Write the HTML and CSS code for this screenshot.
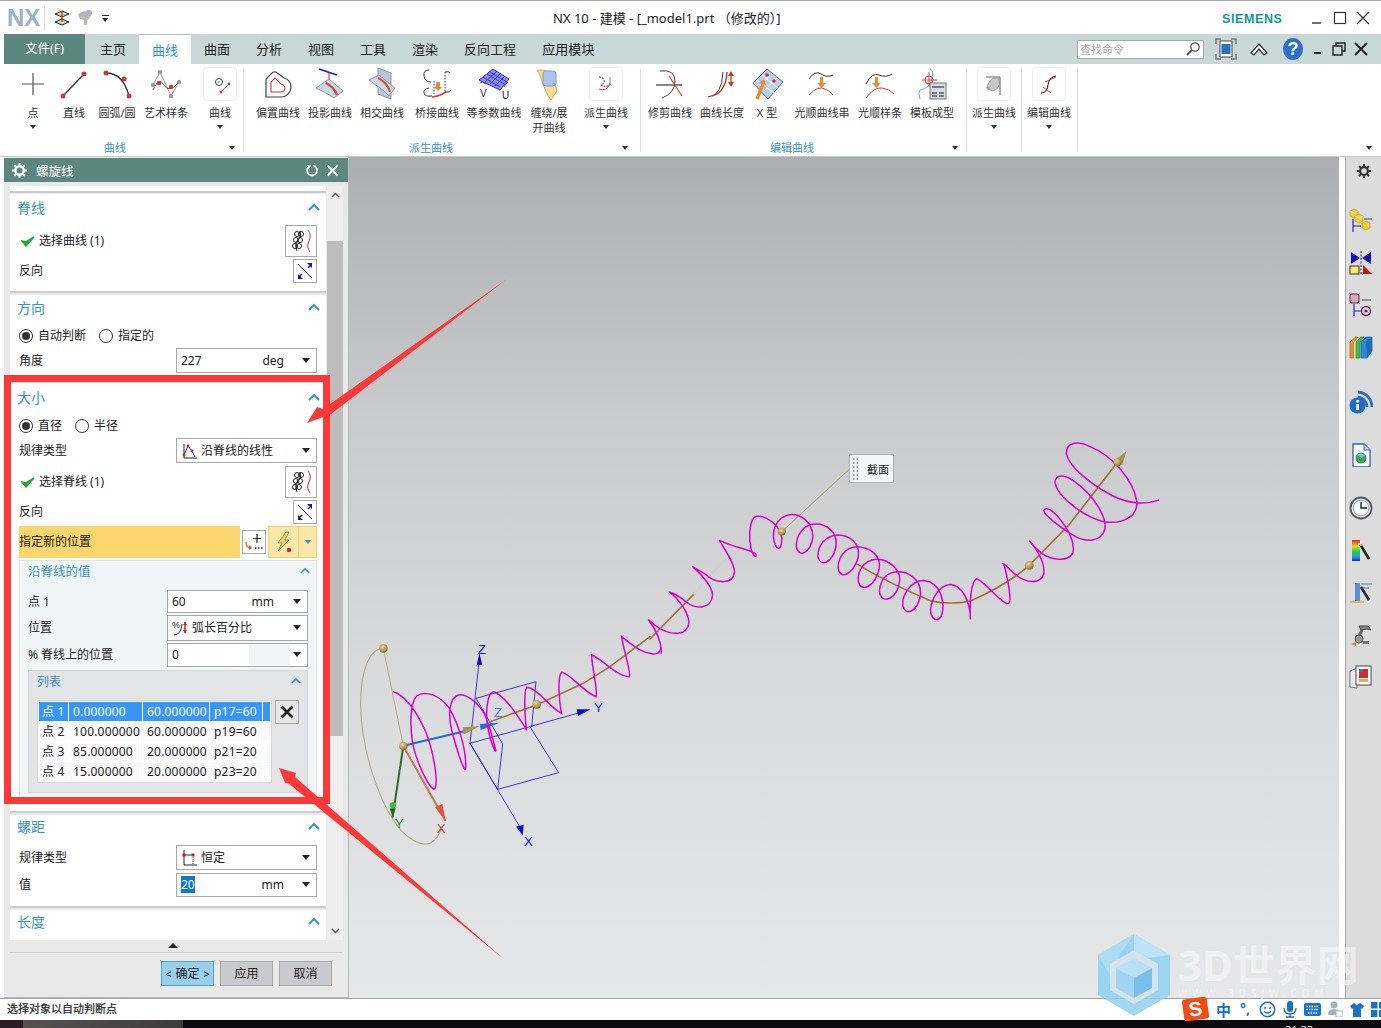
FILE: index.html
```html
<!DOCTYPE html>
<html lang="zh">
<head>
<meta charset="utf-8">
<title>NX 10 - 建模</title>
<link rel="stylesheet" href="styles.css">
</head>
<body>
<div class="app">
  <header class="titlebar">
    <div class="nx">NX</div>
    <div class="qa">
      <svg width="18" height="18" viewBox="0 0 18 18"><path d="M2 5l7-3 7 3-7 3z" fill="#bfe3c0" stroke="#222"/><path d="M2 13l7-3 7 3-7 3z" fill="#bfe3c0" stroke="#222"/><path d="M9 3v10" stroke="#d23a12" stroke-width="1.5"/></svg>
      <svg width="18" height="18" viewBox="0 0 18 18"><path d="M2 6c2-4 11-5 14-2l-3 6-2 1v5H8v-5L4 10z" fill="#b9b9b4"/><circle cx="13" cy="4" r="3" fill="#aab0cc"/></svg>
      <span class="qa-more"></span>
    </div>
    <div class="wintitle">NX 10 - 建模 - [_model1.prt （修改的）]</div>
    <div class="siemens">SIEMENS</div>
    <div class="winbtns">
      <svg width="14" height="14" viewBox="0 0 14 14"><path d="M2 12h9" stroke="#333" stroke-width="1.4"/></svg>
      <svg width="14" height="14" viewBox="0 0 14 14"><rect x="1.5" y="1.5" width="11" height="11" fill="none" stroke="#333" stroke-width="1.2"/></svg>
      <svg width="14" height="14" viewBox="0 0 14 14"><path d="M1 1l12 12M13 1L1 13" stroke="#333" stroke-width="1.3"/></svg>
    </div>
  </header>

  <nav class="tabbar">
    <div class="filetab">文件(F)</div>
    <div class="tab">主页</div>
    <div class="tab active">曲线</div>
    <div class="tab">曲面</div>
    <div class="tab">分析</div>
    <div class="tab">视图</div>
    <div class="tab">工具</div>
    <div class="tab">渲染</div>
    <div class="tab">反向工程</div>
    <div class="tab">应用模块</div>
    <div class="tabtools">
      <div class="search"><span>查找命令</span>
        <svg width="16" height="16" viewBox="0 0 16 16"><circle cx="10" cy="6" r="4.2" fill="#fff" stroke="#555" stroke-width="1.3"/><path d="M7 9l-5 5" stroke="#555" stroke-width="2"/></svg>
      </div>
      <svg class="t-full" width="24" height="24" viewBox="0 0 24 24"><path d="M2 7V2h5M17 2h5v5M22 17v5h-5M7 22H2v-5" fill="none" stroke="#777" stroke-width="1.5"/><rect x="6" y="4" width="12" height="16" fill="#fff" stroke="#444"/><rect x="7.5" y="7" width="9" height="10" fill="#2a70c8"/></svg>
      <svg class="t-up" width="20" height="16" viewBox="0 0 20 16"><path d="M2 12l8-9 8 9-3 2-5-6-5 6z" fill="#fff" stroke="#333" stroke-width="1.2"/></svg>
      <div class="help">?</div>
      <svg class="t-min" width="12" height="12" viewBox="0 0 12 12"><path d="M2 10h7" stroke="#222" stroke-width="2"/></svg>
      <svg class="t-res" width="14" height="14" viewBox="0 0 14 14"><path d="M4 4V1h9v8h-3M1 4h9v9H1z" fill="none" stroke="#222" stroke-width="1.4"/></svg>
      <svg class="t-x" width="14" height="14" viewBox="0 0 14 14"><path d="M1 1l12 12M13 1L1 13" stroke="#222" stroke-width="2"/></svg>
    </div>
  </nav>

  <section class="ribbon">
    <div class="group g1">
      <div class="items">
        <div class="ri w38"><svg class="ic" viewBox="0 0 32 32"><path d="M16 5v22M5 16h22" stroke="#555" stroke-width="1.2"/></svg><span class="rl">点</span><i class="car"></i></div>
        <div class="ri w44"><svg class="ic" viewBox="0 0 32 32"><path d="M5 28L26 6" stroke="#333" stroke-width="1.3"/><circle cx="5" cy="28" r="2.5" fill="#cc3b32"/><circle cx="26" cy="6" r="2.5" fill="#cc3b32"/></svg><span class="rl">直线</span></div>
        <div class="ri w42"><svg class="ic" viewBox="0 0 32 32"><path d="M5 5Q22 5 28 28" fill="none" stroke="#333" stroke-width="1.3"/><circle cx="5" cy="5" r="2.5" fill="#cc3b32"/><circle cx="23" cy="11" r="2.5" fill="#cc3b32"/><circle cx="28" cy="28" r="2.5" fill="#cc3b32"/></svg><span class="rl">圆弧/圆</span></div>
        <div class="ri w54 ml1"><svg class="ic" viewBox="0 0 32 32"><path d="M3 17L10 4 21 28 29 14" fill="none" stroke="#aaa" stroke-width="1.2"/><path d="M3 22Q9 8 14 17T29 14" fill="none" stroke="#555"/><circle cx="3" cy="17" r="2.2" fill="#999"/><circle cx="10" cy="4" r="2.2" fill="#999"/><circle cx="21" cy="28" r="2.2" fill="#999"/><circle cx="29" cy="14" r="2.2" fill="#999"/><circle cx="9" cy="15" r="2.3" fill="#cc3b32"/><circle cx="21" cy="19" r="2.3" fill="#cc3b32"/></svg><span class="rl">艺术样条</span></div>
        <div class="ri w40 ml7"><svg class="ic boxed" viewBox="0 0 32 32"><circle cx="15" cy="14" r="3.5" fill="none" stroke="#333"/><circle cx="15" cy="14" r=".8" fill="#333"/><path d="M17 24l8-8" stroke="#888"/><circle cx="17" cy="24" r="1.4" fill="#cc3b32"/><circle cx="25" cy="16" r="1.4" fill="#cc3b32"/></svg><span class="rl">曲线</span><i class="car"></i></div>
      </div>
      <div class="glabel">曲线<i class="gcar"></i></div>
    </div>
    <div class="group g2">
      <div class="items">
        <div class="ri w52"><svg class="ic" viewBox="0 0 32 32"><path d="M4 29V11l7-7h3l8 6a9 9 0 0 1 7 9 10 10 0 0 1-10 10z" fill="#fff" stroke="#444" stroke-width="1.2"/><path d="M9 24V14l4-4 6 6a5 5 0 0 1 4 4 4 4 0 0 1-4 4z" fill="none" stroke="#cc3b32" stroke-width="1.1"/></svg><span class="rl">偏置曲线</span></div>
        <div class="ri w52"><svg class="ic" viewBox="0 0 32 32"><path d="M5 1l18 6" stroke="#1c1ce0" stroke-width="1.6"/><path d="M15 5v11" stroke="#c23" /><path d="M13 13h4l-2 4z" fill="#c23"/><path d="M2 20l13-9 14 12-9 7C14 26 8 23 2 20z" fill="#c9d7ea" stroke="#8b97ab"/><path d="M12 15q8 4 11 12" fill="none" stroke="#d6482e" stroke-width="2.4"/></svg><span class="rl">投影曲线</span></div>
        <div class="ri w52"><svg class="ic" viewBox="0 0 32 32"><path d="M12 0l13 5v26l-13-5z" fill="#bcc6da" stroke="#8a95ad"/><path d="M3 12L13 7l16 13-6 8C17 21 9 17 3 12z" fill="#ccd9ec" stroke="#8a95ad"/><path d="M12 10q9 4 12 14" fill="none" stroke="#d6552e" stroke-width="2.2"/></svg><span class="rl">相交曲线</span></div>
        <div class="ri w56 ml1"><svg class="ic" viewBox="0 0 32 32"><path d="M8 2Q2 2 3 8t7 6M8 20q-6 1-5 5t8 3" fill="none" stroke="#333"/><path d="M13 13v13M24 4v20" stroke="#2b2bb0" stroke-dasharray="1.5 1.5"/><path d="M24 4q4-1 5 1M24 24q4 1 6-2" fill="none" stroke="#333"/><path d="M11 29q8-1 14-5" fill="none" stroke="#dd3b32" stroke-width="1.6"/><path d="M15 14h4v5h2l-4 4-4-4h2z" fill="#e68a3e"/></svg><span class="rl">桥接曲线</span></div>
        <div class="ri w58"><svg class="ic" viewBox="0 0 32 32"><path d="M1 12L15 1l16 10-9 11C15 19 8 15 1 12z" fill="#8c8af0" stroke="#3131c0"/><path d="M5 9l17 10M9 6l17 10M12 4l17 10M7 14L19 3M12 16L23 5M17 18L27 8" stroke="#2f2fc0" stroke-width=".9"/><path d="M2 15q2-2 6 1M30 14q-3 2-4 5" fill="none" stroke="#444"/><text x="2" y="29" class="svgt">V</text><text x="24" y="31" class="svgt">U</text></svg><span class="rl">等参数曲线</span></div>
        <div class="ri w52"><svg class="ic" viewBox="0 0 32 32"><path d="M4 2c4 4 6 20 14 30l6-9C22 15 16 5 12 2z" fill="#f5dd92" stroke="#c9b06c"/><rect x="10" y="3" width="13" height="15" rx="3" fill="#a8c4ee" stroke="#7e9acb"/></svg><span class="rl">缠绕/展<br>开曲线</span></div>
        <div class="ri w52 ml5"><svg class="ic boxed" viewBox="0 0 32 32"><path d="M9 9q4 0 5 3t-3 5q5 3 10-1" fill="none" stroke="#333" stroke-dasharray="2 1"/><path d="M9 21q8 3 11-6" fill="none" stroke="#dd3b32"/><path d="M20 9v8" stroke="#888"/></svg><span class="rl">派生曲线</span><i class="car"></i></div>
      </div>
      <div class="glabel">派生曲线<i class="gcar"></i></div>
    </div>
    <div class="group g3">
      <div class="items">
        <div class="ri w52"><svg class="ic" viewBox="0 0 32 32"><path d="M6 3q15-2 15 10T8 30" fill="none" stroke="#444"/><path d="M2 17h26" stroke="#222" stroke-width="1.1"/><path d="M15 8l13 20" stroke="#dd3b32" stroke-width="1.2"/></svg><span class="rl">修剪曲线</span></div>
        <div class="ri w52"><svg class="ic" viewBox="0 0 32 32"><path d="M2 29q14-1 15-25" fill="none" stroke="#444"/><path d="M6 28q14-4 15-24" fill="none" stroke="#cc2b22" stroke-width="1.4"/><path d="M25 4v14" stroke="#e08b30" stroke-width="2"/><path d="M22 8l3-5 3 5zM22 14l3 5 3-5z" fill="#cc3b22"/></svg><span class="rl">曲线长度</span></div>
        <div class="ri w38"><svg class="ic" viewBox="0 0 32 32"><path d="M2 15L16 1l16 13-15 17z" fill="#b8d0ea" stroke="#666"/><path d="M6 12l17 13M11 7l16 13M9 18L21 5M13 23L26 10" stroke="#fff"/><circle cx="16" cy="7" r="1.8" fill="#cc3b32"/><circle cx="23" cy="13" r="1.8" fill="#cc3b32"/><circle cx="12" cy="14" r="1.8" fill="#cc3b32"/><path d="M6 31l6-15" stroke="#ef8a2c" stroke-width="3.5"/><path d="M8 15l7 2-2-6z" fill="#ef8a2c"/></svg><span class="rl">X 型</span></div>
        <div class="ri w66 ml3"><svg class="ic" viewBox="0 0 32 32"><path d="M3 11q6-9 12-5t12 1" fill="none" stroke="#333"/><path d="M3 27q9-10 16-6 5 2 8 6" fill="none" stroke="#cc3b32"/><path d="M14 9h3v6h3l-4.500 5-4.500-5h3z" fill="#ee8a30"/></svg><span class="rl">光顺曲线串</span></div>
        <div class="ri w50"><svg class="ic" viewBox="0 0 32 32"><path d="M2 16q6-12 13-9t13-1" fill="none" stroke="#333"/><path d="M2 30q8-11 16-10t12 6" fill="none" stroke="#cc3b32"/><path d="M11 9h3v6h3l-4.500 5-4.500-5h3z" fill="#ee8a30"/></svg><span class="rl">光顺样条</span></div>
        <div class="ri w52 ml1"><svg class="ic" viewBox="0 0 32 32"><path d="M14 1q4 1 2 10T4 22q-2 3 0 9" fill="none" stroke="#7f9fd8"/><path d="M13 4v15M6 12h15" stroke="#cc3b32" stroke-width=".9"/><circle cx="13" cy="12" r="4" fill="none" stroke="#cc3b32"/><rect x="14" y="15" width="16" height="16" fill="#d6dce6" stroke="#777"/><path d="M16 19h12M16 25h5M23 25h5M16 28h5M23 28h5" stroke="#556" stroke-width="1.5"/></svg><span class="rl">模板成型</span></div>
      </div>
      <div class="glabel">编辑曲线<i class="gcar"></i></div>
    </div>
    <div class="group g4">
      <div class="items">
        <div class="ri w54"><svg class="ic boxed" viewBox="0 0 32 32"><path d="M8 9h14v18" fill="none" stroke="#557" stroke-width="1"/><path d="M9 20c2-8 6-11 11-10 3 5 1 12-6 13z" fill="#c8c8c8" stroke="#999"/><circle cx="10" cy="20" r="1.600" fill="#999"/></svg><span class="rl">派生曲线</span><i class="car"></i></div>
      </div>
    </div>
    <div class="group g5">
      <div class="items">
        <div class="ri w54"><svg class="ic boxed" viewBox="0 0 32 32"><path d="M8 25q6 0 7-8t8-9" fill="none" stroke="#222" stroke-width="1.1"/><path d="M10 19l8 6M12 14l11-5" stroke="#cc3b32" stroke-width="1"/></svg><span class="rl">编辑曲线</span><i class="car"></i></div>
      </div>
    </div>
    <i class="gcar far"></i>
  </section>

  <main class="main">
    <aside class="panel">
      <div class="phead">
        <svg width="15" height="15" viewBox="0 0 15 15"><circle cx="7.500" cy="7.500" r="4.200" fill="none" stroke="#fff" stroke-width="2.400"/><path d="M7.500 0v3M7.500 12v3M0 7.500h3M12 7.500h3M2.200 2.200l2 2M10.800 10.800l2 2M12.800 2.200l-2 2M2.200 12.800l2-2" stroke="#fff" stroke-width="2"/></svg>
        <span class="ptitle">螺旋线</span>
        <svg width="13" height="13" viewBox="0 0 13 13"><path d="M3 2.500A5 5 0 1 0 7 1.500" fill="none" stroke="#fff" stroke-width="1.700"/><path d="M1 1l4 .5-2 3z" fill="#fff"/></svg>
        <svg class="pclose" width="13" height="13" viewBox="0 0 13 13"><path d="M1.500 1.500l10 10M11.500 1.500l-10 10" stroke="#fff" stroke-width="2"/></svg>
      </div>
      <div class="scroller">
        <div class="cards">
          <div class="stub"></div>

          <section class="card c1">
            <div class="ctitle"><span>脊线</span><svg class="chev" viewBox="0 0 12 8"><path d="M1 7l5-5 5 5" fill="none" stroke="#3a93c3" stroke-width="2"/></svg></div>
            <div class="row r32 mt3"><svg class="tick" viewBox="0 0 14 12"><path d="M1 6l4 5 8-9-8 5z" fill="#22aa3a" stroke="#22aa3a" stroke-width="1.500"/></svg><span class="grow">选择曲线 (1)</span>
              <div class="ibtn big"><svg width="26" height="26" viewBox="0 0 26 26"><g fill="none" stroke="#222"><circle cx="9" cy="6" r="2.500"/><circle cx="13" cy="6" r="2.500"/><circle cx="8" cy="12" r="2.500"/><circle cx="12" cy="12" r="2.500"/><circle cx="7" cy="18" r="2.500"/><circle cx="11" cy="18" r="2.500"/><path d="M12 3q2 6-2 9t-1 11"/></g><path d="M20 2q4 5 1 11t1 11" fill="none" stroke="#c03030"/></svg></div></div>
            <div class="row r24 mt2"><span class="grow">反向</span><div class="ibtn"><svg width="20" height="20" viewBox="0 0 20 20"><path d="M3 3l14 14" stroke="#222"/><path d="M4 16l3-3M13 7l2-2" stroke="#1616a8" stroke-width="1.500"/><path d="M17 2v5l-5-5zM3 18v-5l5 5z" fill="#1616a8"/></svg></div></div>
            <div class="pb8"></div>
          </section>

          <section class="card c2">
            <div class="ctitle"><span>方向</span><svg class="chev" viewBox="0 0 12 8"><path d="M1 7l5-5 5 5" fill="none" stroke="#3a93c3" stroke-width="2"/></svg></div>
            <div class="row r20 mt3"><i class="radio on"></i><span class="rt">自动判断</span><i class="radio m14"></i><span class="rt">指定的</span></div>
            <div class="row r25 mt2"><span class="lab">角度</span><div class="field"><span class="val">227</span><span class="unit">deg</span><i class="dd"></i></div></div>
            <div class="pb6"></div>
          </section>

          <section class="card c3">
            <div class="ctitle"><span>大小</span><svg class="chev" viewBox="0 0 12 8"><path d="M1 7l5-5 5 5" fill="none" stroke="#3a93c3" stroke-width="2"/></svg></div>
            <div class="row r20 mt5"><i class="radio on"></i><span class="rt">直径</span><i class="radio m14"></i><span class="rt">半径</span></div>
            <div class="row r25 mt2"><span class="lab">规律类型</span><div class="field"><svg class="fic" width="16" height="16" viewBox="0 0 16 16"><path d="M3 1v14h13" fill="none" stroke="#222"/><path d="M3 12L7 3l4 5 3 6" fill="none" stroke="#1a1ab0"/><circle cx="3" cy="12" r="1.400" fill="#c22"/><circle cx="7" cy="3" r="1.400" fill="#c22"/><circle cx="11" cy="8" r="1.400" fill="#c22"/></svg><span class="val">沿脊线的线性</span><i class="dd"></i></div></div>
            <div class="row r32 mt3"><svg class="tick" viewBox="0 0 14 12"><path d="M1 6l4 5 8-9-8 5z" fill="#22aa3a" stroke="#22aa3a" stroke-width="1.500"/></svg><span class="grow">选择脊线 (1)</span>
              <div class="ibtn big"><svg width="26" height="26" viewBox="0 0 26 26"><g fill="none" stroke="#222"><circle cx="9" cy="6" r="2.500"/><circle cx="13" cy="6" r="2.500"/><circle cx="8" cy="12" r="2.500"/><circle cx="12" cy="12" r="2.500"/><circle cx="7" cy="18" r="2.500"/><circle cx="11" cy="18" r="2.500"/><path d="M12 3q2 6-2 9t-1 11"/></g><path d="M20 2q4 5 1 11t1 11" fill="none" stroke="#c03030"/></svg></div></div>
            <div class="row r24 mt2"><span class="grow">反向</span><div class="ibtn"><svg width="20" height="20" viewBox="0 0 20 20"><path d="M3 3l14 14" stroke="#222"/><path d="M4 16l3-3M13 7l2-2" stroke="#1616a8" stroke-width="1.500"/><path d="M17 2v5l-5-5zM3 18v-5l5 5z" fill="#1616a8"/></svg></div></div>
            <div class="row r32 mt2 pointrow">
              <div class="pointlabel">指定新的位置</div>
              <div class="ibtn plus"><svg width="20" height="20" viewBox="0 0 20 20"><path d="M13 2v9M9 6.500h8" stroke="#222" stroke-width="1.200"/><path d="M2 10q0 6 5 6" fill="none" stroke="#e8832a" stroke-width="1.600"/><path d="M5 13l3 3-3 2z" fill="#d8392a"/><path d="M11 16h1.500M14 16h1.500M17 16h1.500" stroke="#222" stroke-width="1.500"/></svg></div>
              <div class="snap"><span class="snapm"><svg width="20" height="22" viewBox="0 0 20 22"><path d="M12 1L4 12h4l-4 8 11-11h-4l4-8z" fill="#f3d24a" stroke="#777" stroke-width=".8"/><circle cx="15" cy="19" r="2.200" fill="#d81f1f"/></svg></span><span class="snapd"><i class="bluecar"></i></span></div>
            </div>
            <div class="sub">
              <div class="stitle"><span>沿脊线的值</span><svg class="chev" viewBox="0 0 12 8"><path d="M1 7l5-5 5 5" fill="none" stroke="#3a93c3" stroke-width="2"/></svg></div>
              <div class="row r23 mt7"><span class="lab">点 1</span><div class="field"><span class="val">60</span><span class="unit u2">mm</span><i class="dd"></i></div></div>
              <div class="row r26 mt2"><span class="lab">位置</span><div class="field"><svg class="fic" width="16" height="16" viewBox="0 0 16 16"><text x="0" y="8" class="pct">%</text><path d="M2 15q7 0 8-11" fill="none" stroke="#222"/><path d="M13 2v11" stroke="#d22" stroke-width="1.600"/><path d="M11 5l2-3 2 3zM11 10l2 3 2-3z" fill="#d22"/></svg><span class="val">弧长百分比</span><i class="dd"></i></div></div>
              <div class="row r24 mt2"><span class="lab">% 脊线上的位置</span><div class="field"><span class="val">0</span><i class="swatch"></i><i class="dd"></i></div></div>
              <div class="listbox">
                <div class="ltitle"><span>列表</span><svg class="chev" viewBox="0 0 12 8"><path d="M1 7l5-5 5 5" fill="none" stroke="#3a93c3" stroke-width="2"/></svg></div>
                <div class="lbody">
                  <table class="tbl">
                    <tr class="sel"><td>点 1</td><td>0.000000</td><td>60.000000</td><td>p17=60</td><td></td></tr>
                    <tr><td>点 2</td><td>100.000000</td><td>60.000000</td><td>p19=60</td><td></td></tr>
                    <tr><td>点 3</td><td>85.000000</td><td>20.000000</td><td>p21=20</td><td></td></tr>
                    <tr><td>点 4</td><td>15.000000</td><td>20.000000</td><td>p23=20</td><td></td></tr>
                  </table>
                  <div class="delbtn"><svg width="14" height="14" viewBox="0 0 14 14"><path d="M1.500 1.500l11 11M12.500 1.500l-11 11" stroke="#222" stroke-width="2.600"/></svg></div>
                </div>
              </div>
            </div>
            <div class="pb13"></div>
          </section>

          <section class="card c4">
            <div class="ctitle t27"><span>螺距</span><svg class="chev" viewBox="0 0 12 8"><path d="M1 7l5-5 5 5" fill="none" stroke="#3a93c3" stroke-width="2"/></svg></div>
            <div class="row r25 mt3"><span class="lab">规律类型</span><div class="field"><svg class="fic" width="16" height="16" viewBox="0 0 16 16"><path d="M3 0v15h13" fill="none" stroke="#222"/><path d="M3 5h9" stroke="#1a1ab0"/><path d="M12 5v10" stroke="#222" stroke-dasharray="1 1"/><rect x="1.500" y="3.500" width="3" height="3" fill="#c22"/><rect x="10.500" y="3.500" width="3" height="3" fill="#c22"/></svg><span class="val">恒定</span><i class="dd"></i></div></div>
            <div class="row r24 mt3"><span class="lab">值</span><div class="field"><span class="val"><b class="hl">20</b></span><span class="unit">mm</span><i class="dd"></i></div></div>
            <div class="pb9"></div>
          </section>

          <section class="card c5">
            <div class="ctitle"><span>长度</span><svg class="chev" viewBox="0 0 12 8"><path d="M1 7l5-5 5 5" fill="none" stroke="#3a93c3" stroke-width="2"/></svg></div>
            <div class="row r25 mt2"><span class="lab"></span><div class="field"></div></div>
          </section>
        </div>
        <div class="scrollbar">
          <div class="sbtn"><svg width="9" height="6" viewBox="0 0 9 6"><path d="M1 5l3.500-3.500L8 5" fill="none" stroke="#555" stroke-width="1.500"/></svg></div>
          <div class="strack"><div class="sthumb"></div></div>
          <div class="sbtn"><svg width="9" height="6" viewBox="0 0 9 6"><path d="M1 1l3.500 3.500L8 1" fill="none" stroke="#555" stroke-width="1.500"/></svg></div>
        </div>
      </div>
      <div class="pfoot">
        <div class="collapse"><i></i></div>
        <div class="btns">
          <div class="btn ok"><em>&lt;</em>确定<em>&gt;</em></div>
          <div class="btn">应用</div>
          <div class="btn">取消</div>
        </div>
      </div>
    </aside>

    <div class="viewport">
      <svg class="scene" viewBox="349 157 990 841">
        <defs>
          <radialGradient id="ball" cx=".4" cy=".35" r=".7"><stop offset="0" stop-color="#e8d89a"/><stop offset=".6" stop-color="#b39a55"/><stop offset="1" stop-color="#6f5f33"/></radialGradient>
        </defs>
        <g transform="translate(650 420) scale(.338)" fill="none" stroke-linecap="round">
          <path d="M390 330L590 145" stroke="#b4a67c" stroke-width="3"/>
          <path d="M0 648L130 515" stroke="#a87038" stroke-width="5"/>
          <path d="M130 515L175 465Q240 385 350 332 400 322 450 340L610 425" stroke="#d2d0cc" stroke-width="4" stroke-dasharray="10 3"/>
          <path d="M610 425Q700 480 830 535 890 548 950 535 1060 485 1122 430L1240 310 1383 125" stroke="#a87038" stroke-width="5"/>
          <path d="M1505 237C1470 250 1420 250 1370 225C1310 195 1240 140 1232 100C1230 70 1260 58 1300 78C1370 105 1430 180 1440 240C1445 290 1390 310 1340 300C1280 285 1205 225 1198 185C1198 158 1230 160 1260 185C1310 220 1355 290 1345 325C1335 360 1290 365 1250 340C1210 315 1165 280 1165 268C1170 255 1190 265 1210 290C1240 325 1260 370 1250 395C1235 420 1190 415 1160 395C1140 380 1125 360 1122 357C1140 375 1170 420 1165 455C1155 490 1110 480 1085 460C1065 445 1050 425 1045 425C1050 430 1065 500 1065 530C1065 555 1045 540 1020 515C1000 495 975 470 965 470C950 480 945 540 948 590C948 540 925 490 890 487C860 488 835 520 830 560C830 590 850 600 862 580C875 540 860 480 810 475C770 475 745 520 748 550C755 580 790 570 800 520C805 470 760 445 725 450C690 455 675 490 680 515C690 545 730 530 738 480C745 440 700 410 670 412C630 415 612 450 617 480C625 510 665 495 678 440C685 400 650 375 610 375C575 378 555 410 557 440C565 475 600 455 615 410C625 365 590 340 555 340C520 342 495 370 497 405C502 435 540 425 550 375C557 330 520 305 485 308C450 312 432 345 433 375C440 410 475 395 482 345C480 300 445 278 415 280C385 283 365 310 365 345C370 385 390 395 390 350C385 310 345 283 315 285C295 290 292 340 298 375C303 405 320 410 312 395C300 385 225 370 205 355C215 375 250 420 250 450C245 490 195 480 175 465C165 455 135 440 125 433C150 455 185 490 185 520C180 560 135 560 110 540C90 525 65 510 60 510C85 530 115 570 115 600C110 640 65 635 35 620C15 610 0 595 -5 590C10 610 35 650 33 690" stroke="#dc00d0" stroke-width="4.500"/>
          <circle cx="390" cy="330" r="12" fill="url(#ball)"/>
          <circle cx="1122" cy="430" r="13" fill="url(#ball)"/>
          <path d="M1372 122l38-30-13 42z" fill="#a8945a"/>
          <circle cx="1383" cy="125" r="12" fill="url(#ball)"/>
        </g>
        <g transform="translate(350 620) scale(.33333)" fill="none" stroke-linecap="round">
          <path d="M100 85C60 85 30 150 32 260C35 400 90 540 130 600C160 650 210 680 240 670C260 660 270 640 275 620" stroke="#b8aa80" stroke-width="3.500"/>
          <path d="M100 85L160 378" stroke="#b8aa80" stroke-width="3"/>
          <g stroke="#1818e0" stroke-width="2.500">
            <path d="M360 370L388 120M360 370L700 275M360 370L515 630"/>
            <path d="M378 235L558 185L545 320M378 235L458 372L443 508L626 458L540 320M360 370L443 508"/>
          </g>
          <path d="M380 135l8-35 9 35z" fill="#10109a"/>
          <path d="M680 268l42 0-38 20z" fill="#0c0cd8"/>
          <path d="M498 620l20 26 3-32z" fill="#0c0cd8"/>
          <text x="383" y="102" class="axis az">Z</text>
          <text x="732" y="275" class="axis az">Y</text>
          <text x="522" y="678" class="axis az">X</text>
          <text x="432" y="292" class="axis ab">Z</text>
          <text x="134" y="625" class="axis ag">Y</text>
          <text x="260" y="638" class="axis ar">X</text>
          <path d="M160 378L128 590" stroke="#2c6e2c" stroke-width="6"/>
          <path d="M119 565h18l-9 28z" fill="#226a22"/>
          <circle cx="128" cy="556" r="9" fill="#36c04a"/>
          <path d="M160 378L285 600" stroke="#c07a50" stroke-width="6"/>
          <path d="M255 562l22-10 10 50z" fill="#e85038"/>
          <path d="M900 50L780 140 700 190 560 255 420 305" stroke="#a87038" stroke-width="5"/>
          <path d="M170 375L350 332" stroke="#1c6ed8" stroke-width="6"/>
          <path d="M338 322l52-4-50 26z" fill="#a8945a"/>
          <path d="M390 312l60-4-58 22z" fill="#1a6cf0"/>
          <path d="M933 85C930 100 915 105 900 100C870 95 840 70 815 50C820 90 845 160 838 170C800 170 755 115 725 105C725 140 745 215 738 230C700 215 660 160 635 157C620 170 630 260 635 280C600 265 565 205 530 202C520 215 525 300 530 330C505 290 465 225 430 215C410 220 405 290 415 330C422 370 440 405 437 390C425 340 420 320 405 285C385 245 345 220 325 225C295 235 295 290 305 330C320 390 345 465 347 445C350 390 325 310 298 265C270 225 225 210 200 228C180 250 178 320 190 380C205 440 245 520 255 505C265 480 250 390 225 330C195 265 160 225 130 215" stroke="#dc00d0" stroke-width="4.500"/>
          <circle cx="100" cy="85" r="13" fill="url(#ball)"/>
          <circle cx="160" cy="378" r="13" fill="url(#ball)"/>
          <circle cx="560" cy="253" r="13" fill="url(#ball)"/>
        </g>
      </svg>
      <div class="note"><i class="grip"></i><span>截面</span></div>
    </div>

    <div class="gutter"></div>

    <aside class="resbar">
      <svg class="rs rgear" viewBox="-5 -5 34 34"><circle cx="12" cy="12" r="5.500" fill="none" stroke="#333" stroke-width="3"/><path d="M12 2v4M12 18v4M2 12h4M18 12h4M5 5l3 3M16 16l3 3M19 5l-3 3M5 19l3-3" stroke="#333" stroke-width="3"/></svg>
      <svg class="rs far1" viewBox="0 0 24 24"><path d="M1 3l4-2 4 2v5L5 10 1 8z" fill="#f4cc3c" stroke="#c09820" stroke-width=".7"/><path d="M6 8l4-2 4 2v5l-4 2-4-2z" fill="#f4cc3c" stroke="#c09820" stroke-width=".7"/><path d="M1 3l4 2 4-2M6 8l4 2 4-2" fill="none" stroke="#fff2a8" stroke-width=".8"/><path d="M4 11v13M4 18h8" stroke="#1a1ac0" stroke-width="1.100"/><path d="M13 15l4-2 4 2v5l-4 2-4-2z" fill="#f4cc3c" stroke="#c09820" stroke-width=".7"/><path d="M15 11h8" stroke="#222" stroke-width=".8"/></svg>
      <svg class="rs m19" viewBox="0 0 24 24"><path d="M2 1l9 6-9 6zM22 1l-9 6 9 6z" fill="#1010c0"/><path d="M12 0v24" stroke="#222" stroke-dasharray="2 1.500"/><rect x="1" y="15" width="9" height="8" fill="#ffe96a" stroke="#333"/><path d="M14 14l9 9h-9z" fill="#b81818"/></svg>
      <svg class="rs" viewBox="0 0 24 24"><rect x="1" y="1" width="9" height="9" rx="2" fill="#d8a8c0" stroke="#702050"/><path d="M5 11v12M5 18h7" stroke="#1a1ac0" stroke-width="1.100"/><path d="M13 7h9" stroke="#222" stroke-width=".8"/><circle cx="17" cy="18" r="4.500" fill="none" stroke="#702050" stroke-width="1.300"/><circle cx="17" cy="18" r="1.600" fill="#702050"/></svg>
      <svg class="rs" viewBox="0 0 24 24"><path d="M1 7l5-5h3L5 7v16H1z" fill="#e8902a" stroke="#a86818" stroke-width=".7"/><path d="M5 7l5-5h3L9 7v16H5z" fill="#f0f0e0" stroke="#a0a090" stroke-width=".5"/><path d="M7 7l5-5h3l-4 5v16H7z" fill="#48c048" stroke="#208020" stroke-width=".7"/><path d="M12 7l5-5h6v14l-5 7h-6z" fill="#2e88d8" stroke="#1860a8" stroke-width=".7"/><path d="M17 7l6-5v14l-5 7z" fill="#1c6cb8"/></svg>
      <svg class="rs far2" viewBox="0 0 24 24"><path d="M9 2a15 15 0 0 1 14 15M9 7a10 10 0 0 1 9 10" fill="none" stroke="#2a6cc8" stroke-width="2.800"/><circle cx="8.500" cy="15.500" r="8" fill="#1c6ccc"/><rect x="7.300" y="14" width="2.600" height="6" fill="#fff"/><circle cx="8.600" cy="11.300" r="1.500" fill="#fff"/></svg>
      <svg class="rs far3" viewBox="0 0 24 24"><path d="M4 1h11l6 6v17H4z" fill="#fff" stroke="#2a62c0" stroke-width="1.300"/><path d="M15 1v6h6" fill="#cfe0f5" stroke="#2a62c0"/><circle cx="12" cy="15" r="5.500" fill="#3aa050"/><path d="M8 12q4-3 8 0l-3 3z" fill="#7cc0e8"/></svg>
      <svg class="rs far3" viewBox="0 0 24 24"><circle cx="12" cy="12" r="10.500" fill="#e8eef8" stroke="#555" stroke-width="1.800"/><circle cx="12" cy="12" r="7.800" fill="#fff" stroke="#7aa0d8"/><path d="M12 6v6h6" fill="none" stroke="#222" stroke-width="1.400"/></svg>
      <svg class="rs m19" viewBox="0 0 24 24"><defs><linearGradient id="rb" x2="0" y2="1"><stop offset="0" stop-color="#e82020"/><stop offset=".3" stop-color="#e8d820"/><stop offset=".55" stop-color="#20d040"/><stop offset=".8" stop-color="#20a0e0"/><stop offset="1" stop-color="#2020c0"/></linearGradient></defs><rect x="3" y="1" width="8" height="21" fill="url(#rb)"/><path d="M11 5l9 15" stroke="#222" stroke-width="2.600"/><path d="M12 5h-3M12 2v5" stroke="#fff"/></svg>
      <svg class="rs" viewBox="0 0 24 24"><path d="M6 2h5v18H6z" fill="#5a8ed0"/><path d="M1 21h14" stroke="#d8b020" stroke-width="1.500"/><path d="M12 3h11M13 7h7" stroke="#4a7ac0"/><path d="M12 6l8 13" stroke="#222" stroke-width="2.600"/></svg>
      <svg class="rs" viewBox="0 0 24 24"><path d="M10 3h9l3 4-4-1-6 1z" fill="#888" stroke="#444"/><path d="M13 7l-5 9" stroke="#666" stroke-width="3"/><circle cx="10" cy="16" r="4" fill="#999" stroke="#555"/><path d="M14 18h6v3h-6z" fill="#777"/><path d="M2 21l5-2v4z" fill="#ee7020"/></svg>
      <svg class="rs" viewBox="0 0 24 24"><path d="M1 6l7-3v20l-7-1z" fill="#eee" stroke="#777"/><rect x="7" y="1" width="15" height="19" fill="#fff" stroke="#444"/><rect x="10" y="4" width="9" height="9" fill="#d82828"/><path d="M10 4h4v3h-4z" fill="#3a70d8"/><rect x="10" y="14" width="9" height="3" fill="#e8a860"/></svg>
    </aside>
  </main>

  <footer class="status">选择对象以自动判断点</footer>
  <div class="taskbar"><i class="tb-a"></i><i class="tb-b"></i><span class="tb-time">21:33</span></div>

  <svg class="annot" viewBox="0 0 1381 1028">
    <rect x="7.500" y="378.500" width="319" height="422" fill="none" stroke="#fd3838" stroke-width="7"/>
    <path d="M507 279L331 414 307 423 317 407 323 409z" fill="#fd3838"/>
    <path d="M505 960L295 777 296 773 279 768 285 783 288 783z" fill="#fd3838"/>
  </svg>

  <div class="watermark">
    <svg class="hex" viewBox="0 0 72 82"><path d="M36 0l36 21v40L36 82 0 61V21z" fill="#8ed0f2" opacity=".85"/><path d="M36 0l36 21-22 3-14-8z" fill="#c4e6f8" opacity=".8"/><path d="M0 21l36-21-14 20-8 24z" fill="#b4def6" opacity=".8"/><path d="M36 16l24 14v26L36 70 12 56V30z" fill="#e4e6e8" opacity=".8"/><path d="M36 24l18 10-18 10-18-10z" fill="#b8e0f6"/><path d="M18 34l18 10v20L18 54z" fill="#a0d4f2"/><path d="M54 34L36 44v20l18-10z" fill="#78c0ea"/></svg>
    <div class="wmtext">3D世界网<small>WWW.3DSJW.COM</small></div>
  </div>

  <div class="ime">
    <div class="sogou">S</div>
    <span class="ime-t">中</span>
    <span class="ime-p">°,</span>
    <svg width="17" height="17" viewBox="0 0 17 17"><circle cx="8.500" cy="8.500" r="7.200" fill="#fff" stroke="#1a72c4" stroke-width="1.500"/><circle cx="6" cy="7" r="1" fill="#1a72c4"/><circle cx="11" cy="7" r="1" fill="#1a72c4"/><path d="M5 10.500q3.500 3 7 0" fill="none" stroke="#1a72c4" stroke-width="1.300"/></svg>
    <svg width="14" height="17" viewBox="0 0 14 17"><rect x="4" y="0" width="6" height="11" rx="3" fill="#1a72c4"/><path d="M1 7q0 6 6 6t6-6M7 13v3M3 16h8" fill="none" stroke="#1a72c4" stroke-width="1.300"/></svg>
    <svg width="17" height="13" viewBox="0 0 17 13"><rect width="17" height="13" rx="2" fill="#1a72c4"/><path d="M2.500 3.500h12M2.500 6.500h12M4 10h9" stroke="#fff" stroke-width="1.400" stroke-dasharray="1.500 1"/></svg>
    <svg width="15" height="16" viewBox="0 0 15 16"><circle cx="6" cy="4" r="3.500" fill="#9fb2c4"/><path d="M0 14q0-6 6-6 3 0 4 2v4z" fill="#9fb2c4"/><rect x="8" y="10" width="7" height="6" fill="#fff" stroke="#9fb2c4"/></svg>
    <svg width="14" height="15" viewBox="0 0 14 15"><path d="M4 1l3 2 3-2 4 3-2 3-1-1v9H3V6L2 7 0 4z" fill="#1a72c4"/></svg>
    <svg width="15" height="15" viewBox="0 0 15 15"><path d="M0 0h6.500v6.500H0zM8 0h7v6.500H8zM0 8h6.500v7H0zM8 8h7v7H8z" fill="#1a72c4"/></svg>
  </div>
</div>
</body>
</html>
```
FILE: styles.css
```css
* { box-sizing: border-box; }
html, body { margin: 0; padding: 0; }
body { background: #fff; font-family: "Noto Sans", "Noto Sans CJK SC", sans-serif; font-size: 12px; color: #222; }
.app { position: relative; width: 1381px; height: 1028px; overflow: hidden; background: #fff; }

/* title bar */
.titlebar { height: 34px; border-top: 1px solid #a8a8a8; display: flex; align-items: center; padding-left: 7px; position: relative; }
.nx { font: bold 24px/1 "Liberation Sans", sans-serif; color: #9db1c5; width: 38px; border-right: 1px solid #ddd; height: 26px; line-height: 26px; }
.qa { display: flex; align-items: center; gap: 5px; margin-left: 8px; width: 60px; }
.qa-more { width: 7px; height: 6px; border-top: 1px solid #222; position: relative; margin-left: 3px; }
.qa-more::after { content: ""; position: absolute; left: 0; top: 2px; border: 3.5px solid transparent; border-top: 4px solid #222; border-bottom: 0; }
.wintitle { margin-left: 440px; font-size: 13px; width: 669px; white-space: nowrap; }
.siemens { font: bold 12.500px/1 "Liberation Sans", sans-serif; color: #0f9a98; letter-spacing: .6px; width: 62px; transform: translateY(2px); }
.winbtns { display: flex; gap: 9px; margin-left: 26px; }

/* tabs */
.tabbar { height: 30px; margin-left: 4px; background: #c8d8d6; display: flex; align-items: stretch; font-size: 13px; line-height: 30px; padding-right: 0; }
.filetab { width: 81px; background: #5c8680; color: #fff; text-align: center; margin-right: 2px; font-size: 12.500px; }
.tab { padding: 0 13px; white-space: nowrap; }
.tab.active { background: #fff; color: #2e93c8; border-top: 1px solid #b0bfbe; }
.tabtools { margin-left: auto; display: flex; align-items: center; width: 304px; }
.search { width: 127px; height: 19px; background: #fff; border: 1px solid #a8a8a8; display: flex; align-items: center; justify-content: space-between; padding: 0 2px 0 2px; font-size: 11px; color: #aaa; line-height: 17px; }
.t-full { margin-left: 10px; }
.t-up { margin-left: 11px; }
.help { width: 20px; height: 22px; border-radius: 50%; background: #2c6fd0; color: #fff; font: bold 18px/22px "Liberation Sans", sans-serif; text-align: center; margin-left: 14px; }
.t-min { margin-left: 9px; }
.t-res { margin-left: 8px; }
.t-x { margin-left: 8px; }

/* ribbon */
.ribbon { height: 93px; display: flex; position: relative; border-bottom: 1px solid #c8c8c8; font-size: 11px; line-height: 15px; }
.group { position: relative; display: flex; flex-direction: column; height: 92px; }
.group::after { content: ""; position: absolute; right: 0; top: 5px; bottom: 4px; border-right: 1px solid #ddd; }
.g1 { width: 244px; padding-left: 14px; }
.g2 { width: 397px; padding-left: 8px; }
.g3 { width: 326px; padding-left: 3px; }
.g4 { width: 55px; }
.g5 { width: 56px; }
.items { display: flex; height: 76px; }
.ri { display: flex; flex-direction: column; align-items: center; text-align: center; flex: none; padding-top: 4px; }
.w38 { width: 38px; } .w40 { width: 40px; } .w42 { width: 42px; } .w44 { width: 44px; } .w50 { width: 50px; } .w52 { width: 52px; } .w54 { width: 54px; } .w56 { width: 56px; } .w58 { width: 58px; } .w66 { width: 66px; }
.ml1 { margin-left: 1px; } .ml3 { margin-left: 3px; } .ml5 { margin-left: 5px; } .ml7 { margin-left: 7px; }
.ic { width: 32px; height: 32px; flex: none; }
.boxed { box-shadow: 0 0 0 1px #eee; border-radius: 3px; }
.rl { margin-top: 5px; white-space: nowrap; color: #333; }
.car { width: 0; height: 0; border: 3px solid transparent; border-top: 4px solid #333; border-bottom: 0; margin-top: 5px; }
.glabel { color: #3a93c3; text-align: center; line-height: 16px; position: relative; }
.g1 .glabel { padding-right: 28px; }
.g2 .glabel { padding-right: 31px; }
.g3 .glabel { padding-right: 27px; }
.gcar { position: absolute; right: 9px; top: 6px; border: 3.500px solid transparent; border-top: 4px solid #333; border-bottom: 0; }
.g2 .gcar { right: 13px; }
.gcar.far { top: 82px; right: 9px; }

/* main */
.main { height: 841px; display: flex; margin-top: 0; }
.panel { width: 345px; margin-left: 4px; flex: none; background: #e9e9e9; border-right: 1px solid #b8b8b8; display: flex; flex-direction: column; border-bottom: 1px solid #b8b8b8; }
.phead { height: 24px; margin-top: 1px; background: #5c8680; color: #fff; display: flex; align-items: center; padding: 0 9px 0 8px; flex: none; }
.ptitle { margin-left: 9px; flex: 1; font-size: 12.500px; }
.pclose { margin-left: 7px; }
.scroller { margin-top: 4px; margin-left: 6px; width: 333px; height: 754px; overflow: hidden; display: flex; flex: none; }
.cards { width: 316px; flex: none; }
.stub { height: 7px; background: #fff; border-bottom: 2px solid #ccc; margin-bottom: 1px; }
.card { background: #fff; border-bottom: 2px solid #ccc; margin-bottom: 2px; padding: 0 9px; }
.c5 { border: 0; }
.ctitle { height: 28px; display: flex; align-items: center; justify-content: space-between; color: #3a93c3; font-size: 14px; }
.ctitle span { margin-left: -2px; }
.c1 .ctitle { padding-bottom: 2px; }
.c2 .ctitle { padding-bottom: 4px; }
.c4 .ctitle, .c5 .ctitle { padding-bottom: 6px; }
.t27 { height: 27px; }
.chev { width: 12px; height: 8px; margin-right: -3px; flex: none; }
.row { display: flex; align-items: center; line-height: 16px; }
.r20 { height: 20px; } .r23 { height: 23px; } .r24 { height: 24px; } .r25 { height: 25px; } .r26 { height: 26px; } .r32 { height: 32px; }
.mt2 { margin-top: 2px; } .mt3 { margin-top: 3px; } .mt5 { margin-top: 5px; } .mt7 { margin-top: 7px; }
.pb6 { height: 6px; } .pb8 { height: 8px; } .pb9 { height: 9px; } .pb13 { height: 13px; }
.grow { flex: 1; }
.lab { flex: 1; white-space: nowrap; }
.tick { width: 14px; height: 12px; margin: 0 4px 0 2px; flex: none; }
.ibtn { width: 24px; height: 24px; border: 1px solid #a8a8a8; background: #fff; display: flex; align-items: center; justify-content: center; flex: none; }
.ibtn.big { width: 32px; height: 32px; }
.radio { width: 14px; height: 14px; border: 1px solid #333; border-radius: 50%; background: #fff; flex: none; position: relative; margin-right: 5px; }
.radio.on::after { content: ""; position: absolute; left: 2px; top: 2px; width: 8px; height: 8px; border-radius: 50%; background: #333; }
.radio.m14 { margin-left: 13px; }
.rt { white-space: nowrap; }
.field { width: 141px; height: 100%; border: 1px solid #a8a8a8; background: #fff; display: flex; align-items: center; padding-left: 4px; flex: none; }
.val { flex: 1; white-space: nowrap; }
.fic { margin-right: 4px; flex: none; }
.unit { margin-right: 15px; font-size: 12px; }
.u2 { margin-right: 16px; }
.dd { width: 17px; flex: none; position: relative; height: 6px; }
.dd::after { content: ""; position: absolute; left: 3px; top: 0; border: 4px solid transparent; border-top: 5px solid #222; border-bottom: 0; }
.swatch { width: 41px; height: 20px; background: #f0f5f5; margin-right: 0; flex: none; }
.hl { background: #0a78d7; color: #fff; font-weight: normal; }

.pointrow { align-items: stretch; }
.pointlabel { width: 221px; background: #fbd56e; line-height: 32px; white-space: nowrap; }
.plus { margin: 4px 0 4px 2px; }
.snap { width: 49px; margin-left: 2px; background: #fae8a8; border: 1px solid #f5cf62; display: flex; }
.snapm { width: 30px; display: flex; align-items: center; justify-content: center; border-right: 1px solid #f5cf62; }
.snapd { flex: 1; display: flex; align-items: center; justify-content: center; }
.bluecar { border: 3px solid transparent; border-top: 4px solid #2e8ed0; border-bottom: 0; }

.sub { margin-top: 2px; background: #f0f5f5; border: 1px solid #dfe5e6; padding: 0 8px 4px; }
.stitle { height: 22px; padding-bottom: 4px; display: flex; align-items: center; justify-content: space-between; color: #3a93c3; font-size: 12.500px; }
.stitle .chev { width: 10px; height: 7px; margin-right: -2px; }
.listbox { margin-top: 3px; height: 123px; background: #e3e4e6; border: 1px solid #d3d4d6; padding: 0 8px; }
.ltitle { height: 23px; padding-bottom: 4px; display: flex; align-items: center; justify-content: space-between; color: #3a93c3; }
.ltitle .chev { margin-right: -2px; width: 10px; height: 7px; }
.lbody { margin-top: 6px; display: flex; align-items: flex-start; }
.tbl { border-collapse: separate; border-spacing: 1px; width: 235px; background: #fff; border: 1px solid #d6d6d6; font-size: 12px; letter-spacing: .2px; table-layout: fixed; }
.tbl td { height: 19px; padding: 0 0 0 4px; white-space: nowrap; line-height: 19px; background: #fafafa; overflow: hidden; }
.tbl td:nth-child(1) { width: 29px; padding-left: 3px; }
.tbl td:nth-child(2) { width: 73px; }
.tbl td:nth-child(3) { width: 66px; }
.tbl td:nth-child(4) { width: 52px; }
.tbl .sel td { background: #3796f8; color: #fff; }
.delbtn { width: 24px; height: 24px; margin-left: 3px; border: 1px solid #a8a8a8; display: flex; align-items: center; justify-content: center; background: #e8e8e8; flex: none; }

.scrollbar { width: 16px; margin-left: 1px; flex: none; background: #eee; display: flex; flex-direction: column; height: 754px; }
.sbtn { height: 18px; display: flex; align-items: center; justify-content: center; flex: none; }
.strack { flex: 1; padding-top: 37px; }
.sthumb { height: 495px; background: #bdbdbd; }

.pfoot { flex: 1; display: flex; flex-direction: column; }
.collapse { height: 13px; margin: 0 6px; border-bottom: 1px solid #cfcfcf; display: flex; justify-content: center; padding: 3px 6px 0 0; }
.collapse i { width: 0; height: 0; border: 5px solid transparent; border-bottom: 5px solid #222; border-top: 0; }
.btns { margin-top: 8px; padding-left: 157px; display: flex; gap: 6px; }
.btn { width: 53px; height: 25px; background: #c9cacd; border: 1px solid #a9a9a9; text-align: center; line-height: 23px; }
.btn.ok { background: #99cfe9; border-color: #4ba3d3; display: flex; justify-content: center; gap: 4px; }
.btn em { font-style: normal; font-size: 11px; }

/* viewport */
.viewport { width: 990px; flex: none; position: relative; background: linear-gradient(#adaeb0 0%, #c9cacc 30%, #d8d9db 60%, #e6e7e9 100%); }
.scene { width: 990px; height: 841px; display: block; }
.svgt { font: 10px "Liberation Sans", sans-serif; fill: #222; }
.axis { font: 40px "Liberation Sans", sans-serif; stroke: none; }
.az { fill: #1414d8; } .ab { fill: #4a78e8; } .ag { fill: #2a8a3a; } .ar { fill: #d04030; }
.pct { font: 9px "Liberation Sans", sans-serif; fill: #222; }
.note { position: absolute; left: 500px; top: 297px; width: 45px; height: 29px; background: #f1f7f8; border: 1px solid #b0b0b0; display: flex; align-items: center; font-size: 11px; }
.grip { width: 7px; height: 24px; margin-left: 2px; background-image: radial-gradient(#aaa 1.200px, transparent 1.300px); background-size: 3.500px 4px; }
.note span { margin-left: 8px; }
.gutter { width: 6px; flex: none; background: #fff; }
.resbar { flex: 1; background: #dcdcdc; border-left: 1px solid #a8a8a8; display: flex; flex-direction: column; align-items: center; padding: 0 6px 0 0; }
.rs { width: 24px; height: 24px; flex: none; margin-top: 18px; }
.rgear { margin-top: 2px; margin-left: 6px; }
.rs.far1 { margin-top: 25px; }
.rs.far2 { margin-top: 31px; }
.rs.far3 { margin-top: 29px; }
.rs.m19 { margin-top: 19px; }

/* status */
.status { height: 22px; border-top: 1px solid #a0a0a0; background: #fff; padding-left: 7px; font-size: 11px; line-height: 20px; -webkit-text-stroke: .2px #222; }
.taskbar { height: 8px; background: #0c0c0e; display: flex; position: relative; overflow: hidden; }
.tb-a { width: 23px; background: #2a1e24; }
.tb-b { width: 160px; background: linear-gradient(90deg, #5a5052, #3c3c3c); }
.tb-time { position: absolute; left: 1285px; top: 4px; color: #fff; font-size: 11px; line-height: 12px; }

/* overlays */
.annot { position: absolute; left: 0; top: 0; width: 1381px; height: 1028px; pointer-events: none; }
.watermark { position: absolute; left: 1098px; top: 934px; display: flex; pointer-events: none; }
.hex { width: 72px; height: 82px; flex: none; }
.wmtext { margin-left: 8px; color: rgba(255,255,255,.45); font: bold 42px/40px "Noto Sans", "Noto Sans CJK SC", sans-serif; white-space: nowrap; padding-top: 11px; height: 64px; }
.wmtext small { display: block; font-size: 10px; font-weight: normal; letter-spacing: 5px; line-height: 10px; margin-top: 3px; }
.ime { position: absolute; left: 1183px; top: 998px; display: flex; align-items: center; gap: 7px; height: 22px; }
.sogou { width: 25px; height: 22px; background: #f04e14; color: #fff; font: bold 20px/22px "Liberation Sans", sans-serif; text-align: center; border-radius: 3px; transform: rotate(-8deg); margin-right: 1px; }
.ime-t { color: #1a72c4; font-size: 15px; font-weight: bold; }
.ime-p { color: #1a72c4; font-size: 14px; font-weight: bold; width: 12px; line-height: 14px; margin-left: 2px; }
```
